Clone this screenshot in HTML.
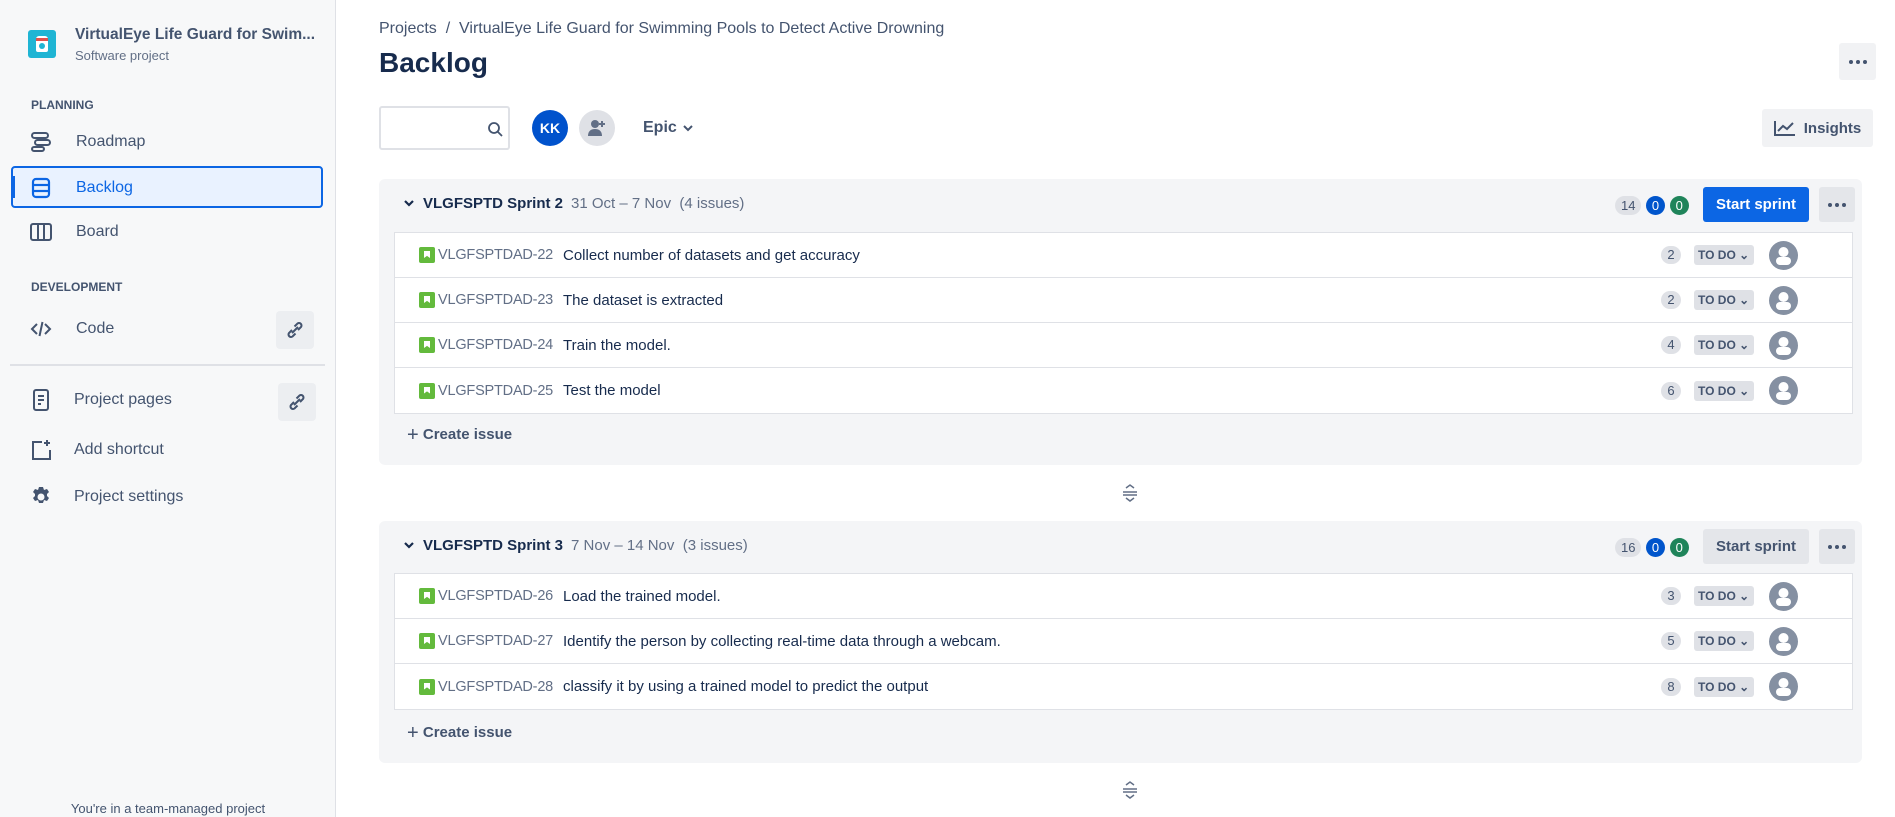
<!DOCTYPE html>
<html><head><meta charset="utf-8"><style>
*{box-sizing:border-box;margin:0;padding:0}
body{width:1895px;height:817px;overflow:hidden;background:#fff;font-family:"Liberation Sans",sans-serif;color:#172b4d;position:relative}
.a{position:absolute}
.side{left:0;top:0;width:336px;height:817px;background:#f7f8f9;border-right:1px solid #dfe1e6}
.nav{left:30px;font-size:16px;color:#44546f;display:flex;align-items:center;height:30px}
.nav svg{margin-right:22px}
.sec{left:31px;font-size:12px;font-weight:bold;color:#44546f}
.lnk{width:38px;height:38px;background:#eceef1;border-radius:4px;display:flex;align-items:center;justify-content:center}
.sprint{left:379px;width:1483px;background:#f4f5f7;border-radius:6px}
.list{position:absolute;left:15px;right:9px;background:#fff;border:1px solid #dfe1e6}
.row{height:45px;border-bottom:1px solid #dfe1e6;position:relative;font-size:15px;display:flex;align-items:center}
.row:last-child{border-bottom:none}
.ico{position:absolute;left:24px;width:16px;height:16px;background:#63ba3c;border-radius:2px}
.ico:after{content:"";position:absolute;left:5px;top:4px;width:6px;height:7px;background:#fff;clip-path:polygon(0 0,100% 0,100% 100%,50% 70%,0 100%)}
.key{position:absolute;left:43px;color:#626f86;font-size:14.5px;letter-spacing:-0.2px}
.sum{position:absolute;left:168px;color:#172b4d}
.est{position:absolute;left:1266px;width:20px;height:18px;border-radius:9px;background:#dfe1e6;font-size:13px;color:#44546f;text-align:center;line-height:18px}
.todo{position:absolute;left:1299px;height:20px;width:60px;background:#dfe1e6;border-radius:3px;font-size:12px;font-weight:bold;color:#44546f;line-height:20px;padding-left:4px}
.av{position:absolute;left:1374px}
.hdr{position:absolute;left:44px;top:16px;font-size:15px;white-space:nowrap}
.badge{display:inline-block;height:19px;border-radius:10px;font-size:13px;line-height:19px;text-align:center;padding:0 6px}
.btn{position:absolute;height:35px;border-radius:3px;font-size:15px;font-weight:bold;display:flex;align-items:center;justify-content:center}
.dots{display:flex;gap:3px;align-items:center;justify-content:center}
.dots i{width:4px;height:4px;border-radius:50%;background:#44546f;display:block}
.create{position:absolute;left:28px;font-size:15px;color:#44546f;font-weight:bold}
</style></head><body>
<div class="a side"></div>
<div class="a" style="left:28px;top:30px;width:28px;height:28px;background:#1fb5d4;border-radius:3px">
<div class="a" style="left:8px;top:6px;width:12px;height:16px;background:#fff;border-radius:3px 3px 2px 2px"></div>
<div class="a" style="left:8px;top:8px;width:12px;height:3px;background:#e0524d"></div>
<div class="a" style="left:11px;top:13px;width:6px;height:6px;background:#1fb5d4;border-radius:50%"></div></div>
<div class="a" style="left:75px;top:26px;font-size:15.5px;font-weight:bold;color:#44546f">VirtualEye Life Guard for Swim...</div>
<div class="a" style="left:75px;top:48px;font-size:13px;color:#626f86">Software project</div>
<div class="a sec" style="top:98px">PLANNING</div>
<div class="a nav" style="top:127px"><svg width="22" height="22" viewBox="0 0 22 22" fill="none" stroke="#44546f" stroke-width="2"><rect x="2" y="2" width="16" height="5" rx="2.5"/><rect x="5" y="9" width="15" height="5" rx="2.5"/><rect x="2" y="16" width="12" height="4" rx="2"/></svg><span style="margin-left:2px">Roadmap</span></div>
<div class="a" style="left:11px;top:166px;width:312px;height:42px;background:#e9f2ff;border:2px solid #0c66e4;border-radius:4px"></div>
<div class="a" style="left:11px;top:176px;width:4px;height:22px;background:#0c66e4"></div>
<div class="a nav" style="top:173px;color:#0c66e4"><svg width="22" height="22" viewBox="0 0 22 22" fill="none" stroke="#0c66e4" stroke-width="2.2"><rect x="3" y="2" width="16" height="18" rx="3"/><line x1="3" y1="8" x2="19" y2="8"/><line x1="3" y1="14" x2="19" y2="14"/></svg><span style="margin-left:2px;color:#0c66e4">Backlog</span></div>
<div class="a nav" style="top:217px"><svg width="22" height="22" viewBox="0 0 22 22" fill="none" stroke="#44546f" stroke-width="2"><rect x="1" y="3" width="20" height="16" rx="2"/><line x1="8" y1="3" x2="8" y2="19"/><line x1="14" y1="3" x2="14" y2="19"/></svg><span style="margin-left:2px">Board</span></div>
<div class="a sec" style="top:280px">DEVELOPMENT</div>
<div class="a nav" style="top:314px"><svg width="22" height="22" viewBox="0 0 22 22" fill="none" stroke="#44546f" stroke-width="2"><path d="M7 6L2 11l5 5M15 6l5 5-5 5M12.5 4l-3 14"/></svg><span style="margin-left:2px">Code</span></div>
<div class="a lnk" style="left:276px;top:311px"><svg width="20" height="20" viewBox="0 0 20 20" fill="none" stroke="#44546f" stroke-width="2"><path d="M7 10l-3 3a2.5 2.5 0 0 0 3.5 3.5l3-3M13 10l3-3a2.5 2.5 0 0 0-3.5-3.5l-3 3M7 13l6-6"/></svg></div>
<div class="a" style="left:10px;top:364px;width:315px;height:2px;background:#dfe1e6"></div>
<div class="a nav" style="top:385px"><svg width="22" height="22" viewBox="0 0 22 22" fill="none" stroke="#44546f" stroke-width="2"><rect x="4" y="1" width="14" height="20" rx="2"/><line x1="8" y1="7" x2="14" y2="7"/><line x1="8" y1="11" x2="14" y2="11"/><line x1="8" y1="15" x2="11" y2="15"/></svg><span style="margin-left:0">Project pages</span></div>
<div class="a lnk" style="left:278px;top:383px"><svg width="20" height="20" viewBox="0 0 20 20" fill="none" stroke="#44546f" stroke-width="2"><path d="M7 10l-3 3a2.5 2.5 0 0 0 3.5 3.5l3-3M13 10l3-3a2.5 2.5 0 0 0-3.5-3.5l-3 3M7 13l6-6"/></svg></div>
<div class="a nav" style="top:435px"><svg width="22" height="22" viewBox="0 0 22 22" fill="none" stroke="#44546f" stroke-width="2"><path d="M12 3H3v17h17v-9"/><path d="M17 1v6M14 4h6"/></svg><span style="margin-left:0">Add shortcut</span></div>
<div class="a nav" style="top:482px"><svg width="22" height="22" viewBox="0 0 22 22"><path fill="#44546f" d="M9 1h4l1 3 3-1 2 3-2 2 0 2 2 2-2 3-3-1-1 3H9l-1-3-3 1-2-3 2-2v-2L3 6l2-3 3 1z"/><circle cx="11" cy="11" r="3.5" fill="#f7f8f9"/></svg><span style="margin-left:0">Project settings</span></div>
<div class="a" style="left:0;width:336px;top:801px;text-align:center;font-size:13px;color:#44546f">You're in a team-managed project</div>

<div class="a" style="left:379px;top:20px;font-size:16px;color:#44546f">Projects &nbsp;/ &nbsp;VirtualEye Life Guard for Swimming Pools to Detect Active Drowning</div>
<div class="a" style="left:379px;top:47px;font-size:28px;font-weight:bold;color:#172b4d">Backlog</div>
<div class="a dots" style="left:1839px;top:43px;width:37px;height:37px;background:#f1f2f4;border-radius:3px"><i></i><i></i><i></i></div>
<div class="a" style="left:379px;top:106px;width:131px;height:44px;border:2px solid #dfe1e6;border-radius:3px"><svg class="a" style="left:106px;top:13px" width="16" height="16" viewBox="0 0 16 16" fill="none" stroke="#44546f" stroke-width="1.8"><circle cx="7" cy="7" r="5"/><path d="M11 11l4 4"/></svg></div>
<div class="a" style="left:532px;top:110px;width:36px;height:36px;border-radius:50%;background:#0052cc;color:#fff;font-size:14px;font-weight:bold;text-align:center;line-height:36px">KK</div>
<div class="a" style="left:579px;top:110px;width:36px;height:36px;border-radius:50%;background:#dfe1e6"><svg class="a" style="left:8px;top:8px" width="20" height="20" viewBox="0 0 20 20" fill="#626f86"><circle cx="8" cy="6" r="4"/><path d="M1 18c0-5 3-7 7-7s7 2 7 7z"/><path d="M15 3v6M12 6h6" stroke="#626f86" stroke-width="2"/></svg></div>
<div class="a" style="left:643px;top:119px;font-size:16px;color:#44546f;font-weight:bold">Epic</div>
<svg class="a" style="left:682px;top:123px" width="12" height="10" viewBox="0 0 12 10"><path d="M2 3l4 4 4-4" fill="none" stroke="#44546f" stroke-width="2"/></svg>
<div class="a" style="left:1762px;top:109px;width:111px;height:38px;background:#f1f2f4;border-radius:3px;font-size:15px;font-weight:bold;color:#44546f;display:flex;align-items:center;justify-content:center"><svg width="22" height="16" viewBox="0 0 22 16" fill="none" stroke="#44546f" stroke-width="2" style="margin-right:8px"><path d="M1 1v14h20M4 11l5-5 4 3 6-6"/></svg>Insights</div>

<div class="a sprint" style="top:179px;height:286px">
<svg class="a" style="left:24px;top:20px" width="12" height="10" viewBox="0 0 12 10"><path d="M2 2l4 4 4-4" fill="none" stroke="#172b4d" stroke-width="2.2"/></svg>
<div class="hdr"><b>VLGFSPTD Sprint 2</b><span style="color:#626f86;margin-left:8px">31 Oct – 7 Nov &nbsp;(4 issues)</span></div>
<div class="a" style="left:1236px;top:17px"><span class="badge" style="background:#dfe1e6;color:#44546f">14</span> <span class="badge" style="background:#0055cc;color:#fff">0</span> <span class="badge" style="background:#1f845a;color:#fff">0</span></div>
<div class="btn" style="left:1324px;top:8px;width:106px;background:#0c66e4;color:#fff">Start sprint</div>
<div class="btn dots" style="left:1440px;top:8px;width:36px;background:#e4e6ea"><i></i><i></i><i></i></div>
<div class="list" style="top:53px">
<div class="row"><i class="ico"></i><span class="key">VLGFSPTDAD-22</span><span class="sum">Collect number of datasets and get accuracy</span><span class="est">2</span><span class="todo">TO DO ⌄</span><svg class="av" width="29" height="29" viewBox="0 0 29 29"><circle cx="14.5" cy="14.5" r="14.5" fill="#8590a2"/><circle cx="14.5" cy="11" r="5" fill="#fff"/><rect x="7" y="16" width="15" height="8" rx="4" fill="#fff"/></svg></div>
<div class="row"><i class="ico"></i><span class="key">VLGFSPTDAD-23</span><span class="sum">The dataset is extracted</span><span class="est">2</span><span class="todo">TO DO ⌄</span><svg class="av" width="29" height="29" viewBox="0 0 29 29"><circle cx="14.5" cy="14.5" r="14.5" fill="#8590a2"/><circle cx="14.5" cy="11" r="5" fill="#fff"/><rect x="7" y="16" width="15" height="8" rx="4" fill="#fff"/></svg></div>
<div class="row"><i class="ico"></i><span class="key">VLGFSPTDAD-24</span><span class="sum">Train the model.</span><span class="est">4</span><span class="todo">TO DO ⌄</span><svg class="av" width="29" height="29" viewBox="0 0 29 29"><circle cx="14.5" cy="14.5" r="14.5" fill="#8590a2"/><circle cx="14.5" cy="11" r="5" fill="#fff"/><rect x="7" y="16" width="15" height="8" rx="4" fill="#fff"/></svg></div>
<div class="row"><i class="ico"></i><span class="key">VLGFSPTDAD-25</span><span class="sum">Test the model</span><span class="est">6</span><span class="todo">TO DO ⌄</span><svg class="av" width="29" height="29" viewBox="0 0 29 29"><circle cx="14.5" cy="14.5" r="14.5" fill="#8590a2"/><circle cx="14.5" cy="11" r="5" fill="#fff"/><rect x="7" y="16" width="15" height="8" rx="4" fill="#fff"/></svg></div>
</div>
<div class="create" style="top:245px"><span style="font-size:20px;font-weight:normal;vertical-align:-2px">+</span> Create issue</div>
</div>
<svg class="a" style="left:1122px;top:484px" width="16" height="18" viewBox="0 0 16 18" fill="none" stroke="#626f86" stroke-width="1.5"><path d="M4 4l4-3 4 3M1 8h14M1 11h14M4 14l4 3 4-3"/></svg>

<div class="a sprint" style="top:521px;height:242px">
<svg class="a" style="left:24px;top:20px" width="12" height="10" viewBox="0 0 12 10"><path d="M2 2l4 4 4-4" fill="none" stroke="#172b4d" stroke-width="2.2"/></svg>
<div class="hdr"><b>VLGFSPTD Sprint 3</b><span style="color:#626f86;margin-left:8px">7 Nov – 14 Nov &nbsp;(3 issues)</span></div>
<div class="a" style="left:1236px;top:17px"><span class="badge" style="background:#dfe1e6;color:#44546f">16</span> <span class="badge" style="background:#0055cc;color:#fff">0</span> <span class="badge" style="background:#1f845a;color:#fff">0</span></div>
<div class="btn" style="left:1324px;top:8px;width:106px;background:#e4e6ea;color:#44546f">Start sprint</div>
<div class="btn dots" style="left:1440px;top:8px;width:36px;background:#e4e6ea"><i></i><i></i><i></i></div>
<div class="list" style="top:52px">
<div class="row"><i class="ico"></i><span class="key">VLGFSPTDAD-26</span><span class="sum">Load the trained model.</span><span class="est">3</span><span class="todo">TO DO ⌄</span><svg class="av" width="29" height="29" viewBox="0 0 29 29"><circle cx="14.5" cy="14.5" r="14.5" fill="#8590a2"/><circle cx="14.5" cy="11" r="5" fill="#fff"/><rect x="7" y="16" width="15" height="8" rx="4" fill="#fff"/></svg></div>
<div class="row"><i class="ico"></i><span class="key">VLGFSPTDAD-27</span><span class="sum">Identify the person by collecting real-time data through a webcam.</span><span class="est">5</span><span class="todo">TO DO ⌄</span><svg class="av" width="29" height="29" viewBox="0 0 29 29"><circle cx="14.5" cy="14.5" r="14.5" fill="#8590a2"/><circle cx="14.5" cy="11" r="5" fill="#fff"/><rect x="7" y="16" width="15" height="8" rx="4" fill="#fff"/></svg></div>
<div class="row"><i class="ico"></i><span class="key">VLGFSPTDAD-28</span><span class="sum">classify it by using a trained model to predict the output</span><span class="est">8</span><span class="todo">TO DO ⌄</span><svg class="av" width="29" height="29" viewBox="0 0 29 29"><circle cx="14.5" cy="14.5" r="14.5" fill="#8590a2"/><circle cx="14.5" cy="11" r="5" fill="#fff"/><rect x="7" y="16" width="15" height="8" rx="4" fill="#fff"/></svg></div>
</div>
<div class="create" style="top:201px"><span style="font-size:20px;font-weight:normal;vertical-align:-2px">+</span> Create issue</div>
</div>
<svg class="a" style="left:1122px;top:781px" width="16" height="18" viewBox="0 0 16 18" fill="none" stroke="#626f86" stroke-width="1.5"><path d="M4 4l4-3 4 3M1 8h14M1 11h14M4 14l4 3 4-3"/></svg>
</body></html>
